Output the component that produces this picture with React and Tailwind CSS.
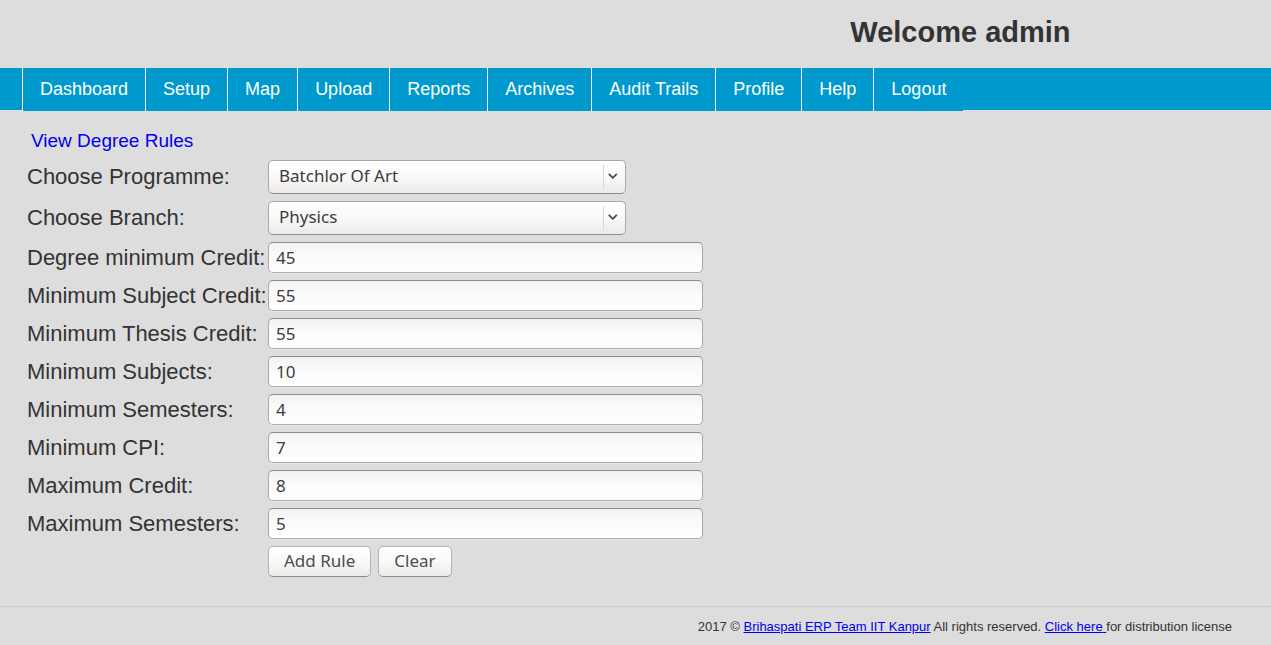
import React from "react";

const menu = [
  "Dashboard",
  "Setup",
  "Map",
  "Upload",
  "Reports",
  "Archives",
  "Audit Trails",
  "Profile",
  "Help",
  "Logout",
];

const selects = [
  { id: "programme", label: "Choose Programme:", options: ["Batchlor Of Art"] },
  { id: "branch", label: "Choose Branch:", options: ["Physics"] },
];

const fields = [
  { id: "degree-min-credit", label: "Degree minimum Credit:", value: "45" },
  { id: "min-subject-credit", label: "Minimum Subject Credit:", value: "55" },
  { id: "min-thesis-credit", label: "Minimum Thesis Credit:", value: "55" },
  { id: "min-subjects", label: "Minimum Subjects:", value: "10" },
  { id: "min-semesters", label: "Minimum Semesters:", value: "4" },
  { id: "min-cpi", label: "Minimum CPI:", value: "7" },
  { id: "max-credit", label: "Maximum Credit:", value: "8" },
  { id: "max-semesters", label: "Maximum Semesters:", value: "5" },
];

function SelectField({ id, options }) {
  return (
    <div className="grid w-full max-w-[358px] items-center">
      <select
        id={id}
        defaultValue={options[0]}
        className="col-start-1 row-start-1 h-[34px] w-full appearance-none rounded-[5px] border border-[#aaaaaa] border-b-[#8c8c8c] bg-linear-to-b from-white via-[#f9f9f8] to-[#ebeae8] pr-8 pb-0.5 pl-2.5 font-['Noto_Sans',sans-serif] text-[17px] text-[#3c3c3c]"
      >
        {options.map((option) => (
          <option key={option}>{option}</option>
        ))}
      </select>
      <span className="pointer-events-none col-start-1 row-start-1 flex h-6 items-center justify-self-end border-l border-[#d6d6d6] pr-2 pb-0.5 pl-1">
        <svg width="10" height="6" viewBox="0 0 10 6" fill="none" aria-hidden="true">
          <path d="M0.8 0.8l4 4 4-4" stroke="#4a4a4a" strokeWidth="1.8" />
        </svg>
      </span>
    </div>
  );
}

function FormButton({ type, children }) {
  return (
    <button
      type={type}
      className="h-[31px] rounded-[5px] border border-[#b2b2b2] border-b-[#8c8c8c] bg-linear-to-b from-white via-[#f9f9f8] to-[#ebeae8] px-[15px] pb-0.5 font-['Noto_Sans',sans-serif] text-[17px] leading-6 text-[#4c4c4c]"
    >
      {children}
    </button>
  );
}

export default function App() {
  return (
    <div className="flex min-h-screen flex-col bg-[#dddddd] font-['Liberation_Sans',Arial,sans-serif] text-[#333333]">
      <header className="pt-3 pb-4 pl-[66.9%]">
        <h1 className="text-[29px] leading-10 font-bold whitespace-nowrap">Welcome admin</h1>
      </header>

      <nav className="h-[42px] bg-[#0099cd] pl-[22px]">
        <ul className="flex">
          {menu.map((item) => (
            <li key={item} className="border-l border-white bg-[#0099cd]">
              <a href="#" className="block px-[17px] text-[18px] leading-[43px] whitespace-nowrap text-white">
                {item}
              </a>
            </li>
          ))}
        </ul>
      </nav>

      <main className="px-[27px] pt-[19px] pb-[29px]">
        <a href="#" className="ml-1 inline-block text-[19px] leading-6 text-[#0000ee]">
          View Degree Rules
        </a>
        <form
          onSubmit={(event) => event.preventDefault()}
          className="mt-1.5 grid grid-cols-[241px_minmax(0,435px)] items-center gap-y-[7px] text-[22px]"
        >
          {selects.map((field) => (
            <React.Fragment key={field.id}>
              <label htmlFor={field.id} className="leading-7 whitespace-nowrap">
                {field.label}
              </label>
              <SelectField id={field.id} options={field.options} />
            </React.Fragment>
          ))}
          {fields.map((field) => (
            <React.Fragment key={field.id}>
              <label htmlFor={field.id} className="leading-7 whitespace-nowrap">
                {field.label}
              </label>
              <input
                id={field.id}
                type="text"
                defaultValue={field.value}
                className="h-[31px] w-full rounded-[5px] border border-[#aaaaaa] border-t-[#8c8c8c] bg-linear-to-b from-[#f3f3f3] via-[#fbfbfb] to-white px-[7px] font-['Noto_Sans',sans-serif] text-[17px] text-[#3c3c3c] shadow-[0_1px_0_#ebebeb]"
              />
            </React.Fragment>
          ))}
          <div className="col-start-2 flex gap-[7px]">
            <FormButton type="submit">Add Rule</FormButton>
            <FormButton type="reset">Clear</FormButton>
          </div>
        </form>
      </main>

      <footer className="border-t border-[#cccccc] py-2.5 pr-[39px] text-right text-[13px] leading-5">
        2017 ©{" "}
        <a href="#" className="text-[#0000ee] underline">
          Brihaspati ERP Team IIT Kanpur
        </a>{" "}
        All rights reserved.{" "}
        <a href="#" className="text-[#0000ee] underline">
          Click here{" "}
        </a>
        for distribution license
      </footer>
    </div>
  );
}
